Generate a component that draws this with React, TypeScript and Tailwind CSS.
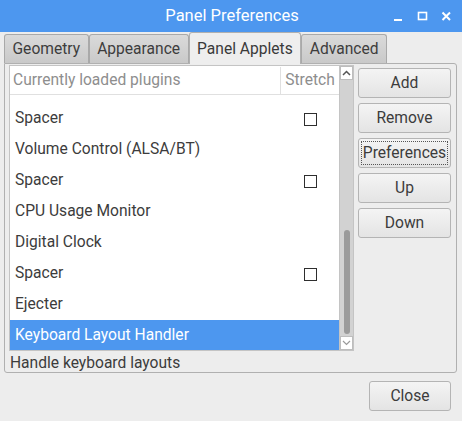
import React from "react";

const rows: { name: string; stretch: boolean }[] = [
  { name: "Spacer", stretch: true },
  { name: "Volume Control (ALSA/BT)", stretch: false },
  { name: "Spacer", stretch: true },
  { name: "CPU Usage Monitor", stretch: false },
  { name: "Digital Clock", stretch: false },
  { name: "Spacer", stretch: true },
  { name: "Ejecter", stretch: false },
  { name: "Keyboard Layout Handler", stretch: false },
];

function Tab({ label, active }: { label: string; active?: boolean }) {
  return (
    <div
      className={`flex items-center justify-center px-[7.5px] pt-[2px] border border-b-0 rounded-t-[3px] ${
        active
          ? "h-[32px] bg-[#eeeeee] border-[#b0b0b0] text-[#3a3a3a] relative z-10 -mb-px"
          : "h-[29px] bg-gradient-to-b from-[#dadada] to-[#c9c9c9] border-[#a9a9a9] text-[#3d3d3d]"
      }`}
    >
      {label}
    </div>
  );
}

function Button({ label, focused }: { label: string; focused?: boolean }) {
  return (
    <div className="h-[30px] rounded-[3px] border border-[#b4b4b4] bg-gradient-to-b from-[#f4f4f4] to-[#e4e4e4] flex items-center justify-center text-[#3c3c3c] p-[2px]">
      <div
        className={`w-full h-full flex items-center justify-center pt-[2px] ${
          focused ? "border border-dotted border-[#555]" : ""
        }`}
      >
        {label}
      </div>
    </div>
  );
}

export default function App() {
  return (
    <div
      className="w-[462px] h-[421px] bg-[#ededed] flex flex-col text-[15.6px] overflow-hidden"
      style={{ fontFamily: "Roboto, 'Liberation Sans', sans-serif" }}
    >
      {/* title bar */}
      <div className="h-[32px] bg-[#4d97ef] flex items-center relative shrink-0">
        <div className="flex-1 text-center text-white text-[16.5px] pl-[2px]">Panel Preferences</div>
        <div className="absolute right-[10px] top-0 h-full flex items-center gap-[13px] text-white">
          <svg width="11" height="11" viewBox="0 0 11 11">
            <rect x="1" y="8" width="8" height="2" fill="white" />
          </svg>
          <svg width="11" height="11" viewBox="0 0 11 11">
            <rect x="1.5" y="1.5" width="8" height="7" fill="none" stroke="white" strokeWidth="1.6" />
          </svg>
          <svg width="11" height="11" viewBox="0 0 11 11">
            <path d="M1.5 1.5 L9 9 M9 1.5 L1.5 9" stroke="white" strokeWidth="2" />
          </svg>
        </div>
      </div>

      {/* tabs */}
      <div className="flex items-end pl-[4px] h-[31px] shrink-0">
        <Tab label="Geometry" />
        <Tab label="Appearance" />
        <Tab label="Panel Applets" active />
        <Tab label="Advanced" />
      </div>

      {/* notebook page */}
      <div className="ml-[4px] mr-[5px] h-[310px] border border-[#b0b0b0] rounded-b-[3px] rounded-tr-[3px] flex flex-col pl-[4px] pr-[5px] pt-[1px] shrink-0">
        <div className="flex gap-[4px] h-[286px]">
          {/* list */}
          <div className="w-[345px] flex border border-[#c4c4c4] bg-white">
            <div className="flex-1 flex flex-col overflow-hidden">
              <div className="h-[29px] flex shrink-0 border-b border-[#e0e0e0] text-[#8e8e8e] pt-[1px]">
                <div className="w-[271px] border-r border-[#e0e0e0] flex items-center pl-[3px]">
                  Currently loaded plugins
                </div>
                <div className="flex-1 flex items-center justify-center">Stretch</div>
              </div>
              <div className="h-[8px] shrink-0" />
              {rows.map((r, i) => {
                const sel = i === rows.length - 1;
                return (
                  <div
                    key={i}
                    className={`h-[31px] shrink-0 flex items-center pt-[1px] ${
                      sel ? "bg-[#4d97ef] text-white" : "text-[#3c3c3c]"
                    }`}
                  >
                    <div className="w-[271px] pl-[5px]">{r.name}</div>
                    <div className="flex-1 flex justify-center">
                      {r.stretch && <div className="w-[13px] h-[13px] border border-[#2e2e2e] bg-white" />}
                    </div>
                  </div>
                );
              })}
            </div>
            {/* scrollbar */}
            <div className="w-[14px] bg-[#d2d2d2] flex flex-col border-l border-[#c4c4c4]">
              <div className="h-[14px] bg-white border border-[#bdbdbd] flex items-center justify-center">
                <svg width="9" height="6" viewBox="0 0 9 6">
                  <path d="M1 5 L4.5 1.5 L8 5" fill="none" stroke="#555" strokeWidth="1.5" />
                </svg>
              </div>
              <div className="flex-1 flex flex-col justify-end items-center pb-[2px]">
                <div className="w-[6px] h-[104px] rounded-full bg-[#9b9b9b]" />
              </div>
              <div className="h-[14px] bg-white border border-[#bdbdbd] flex items-center justify-center">
                <svg width="9" height="6" viewBox="0 0 9 6">
                  <path d="M1 1 L4.5 4.5 L8 1" fill="none" stroke="#9a9a9a" strokeWidth="1.2" />
                </svg>
              </div>
            </div>
          </div>

          {/* buttons */}
          <div className="flex-1 flex flex-col gap-[5px] pt-[3px]">
            <Button label="Add" />
            <Button label="Remove" />
            <Button label="Preferences" focused />
            <Button label="Up" />
            <Button label="Down" />
          </div>
        </div>
        <div className="flex-1 flex items-center text-[#3c3c3c] pl-[1px] pt-[1px]">Handle keyboard layouts</div>
      </div>

      {/* bottom buttons */}
      <div className="flex justify-end pr-[11px] pt-[8px]">
        <div className="w-[82px]">
          <Button label="Close" />
        </div>
      </div>
    </div>
  );
}
